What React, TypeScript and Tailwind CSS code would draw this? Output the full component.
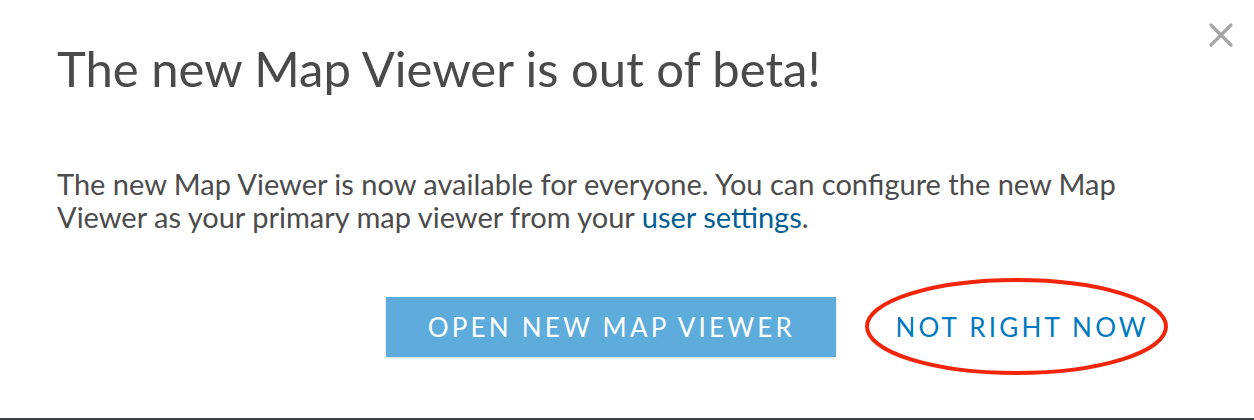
import React from "react";

export default function App() {
  return (
    <div className="w-[1254px] h-[420px] bg-white flex flex-col" style={{ fontFamily: "Lato, 'Noto Sans', sans-serif" }}>
      <div className="relative flex-1 flex flex-col pl-[57px] pr-[72px]">
        <button className="absolute right-[20px] top-[22px] w-[26px] h-[26px] text-[#a6a6a6]" aria-label="close">
          <svg viewBox="0 0 26 26" width="26" height="26" fill="none" stroke="currentColor" strokeWidth="3.2" strokeLinecap="round">
            <path d="M3 3 L23 23 M23 3 L3 23" />
          </svg>
        </button>
        <h1 className="mt-[38px] text-[49px] leading-[60px] text-[#4a4a4a] font-normal">The new Map Viewer is out of beta!</h1>
        <p className="mt-[69px] text-[29px] leading-[33px] text-[#4c4c4c]">
          The new Map Viewer is now available for everyone. You can configure the new Map
          <br />
          Viewer as your primary map viewer from your <a className="text-[#005e95]">user settings</a>.
        </p>
        <div className="mt-[64px] flex justify-end items-center gap-[32px]">
          <button className="w-[450px] h-[60px] bg-[#5dacdc] text-white text-[26px] tracking-[3.2px] shadow-[0_1px_3px_rgba(0,0,0,0.15)]">
            OPEN NEW MAP VIEWER
          </button>
          <button className="relative h-[60px] pl-[27px] pr-[33px] text-[#0079c1] text-[26px] tracking-[3.2px]">
            NOT RIGHT NOW
            <svg className="absolute left-[-5px] top-[-21px] pointer-events-none" width="308" height="102" viewBox="0 0 308 102" fill="none">
              <ellipse cx="153.5" cy="50.5" rx="149.5" ry="46.5" stroke="#f2250b" strokeWidth="4" />
            </svg>
          </button>
        </div>
      </div>
      <div className="h-[2px] bg-[#38444a]" />
    </div>
  );
}
